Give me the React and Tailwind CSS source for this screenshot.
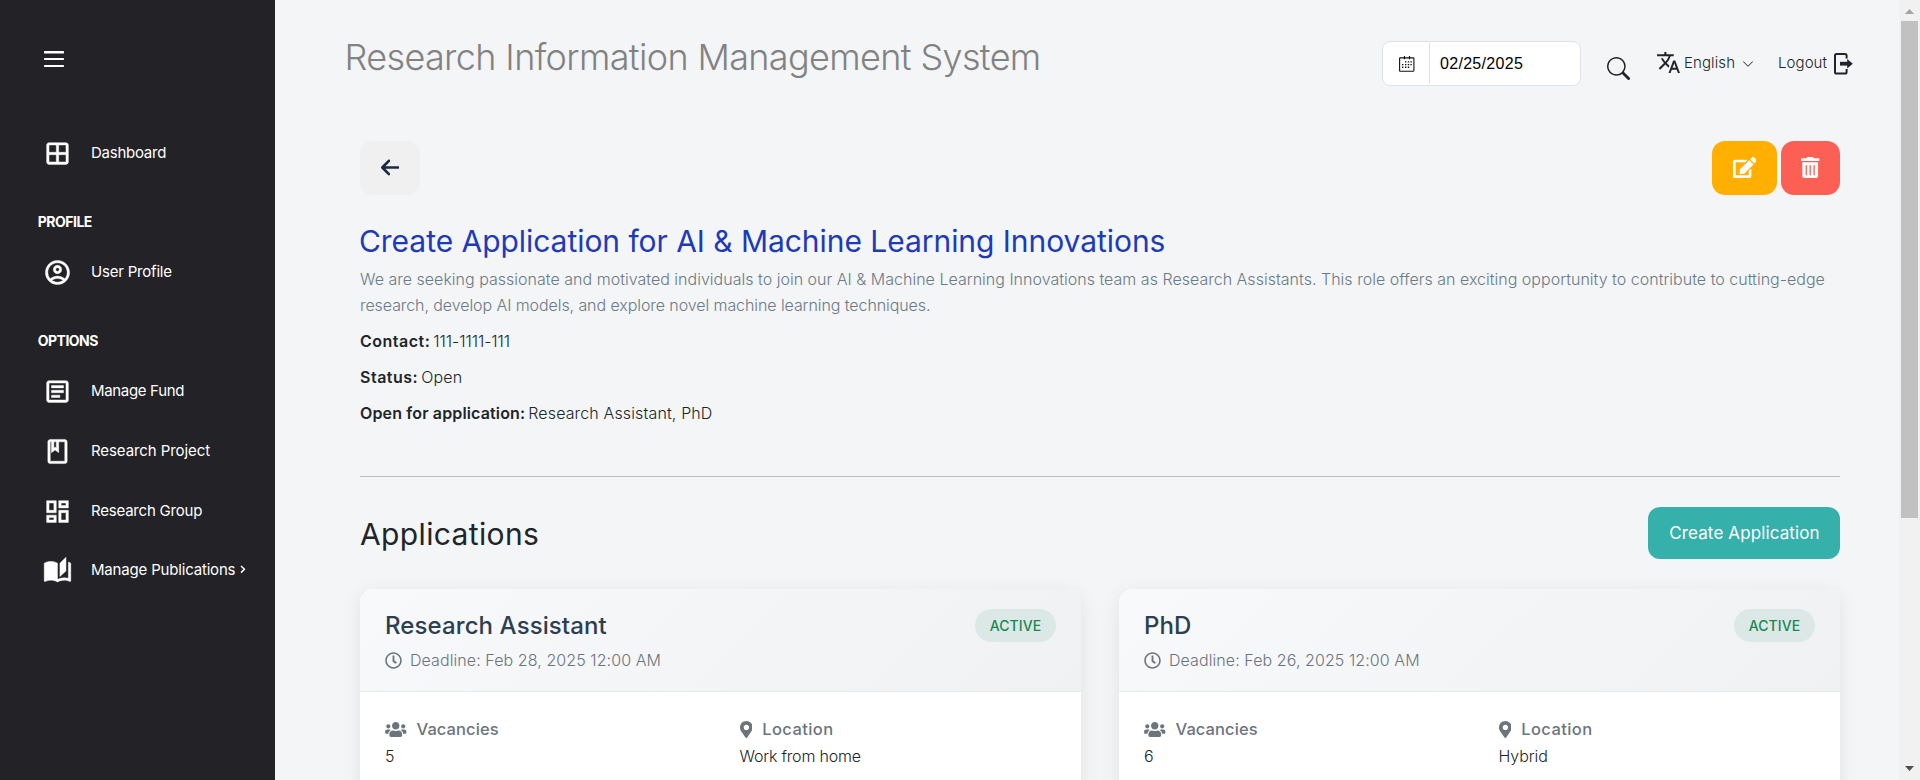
import {
  MdOutlineWindow,
  MdOutlineAccountCircle,
  MdOutlineArticle,
  MdOutlineBook,
  MdOutlineDashboard,
  MdAutoStories,
  MdTranslate,
} from "react-icons/md";
import { BsSearch, BsChevronDown } from "react-icons/bs";
import { FaArrowLeft } from "react-icons/fa6";
import { FaEdit, FaTrashAlt, FaRegClock, FaUsers, FaMapMarkerAlt } from "react-icons/fa";

function NavItem({ icon: Icon, label, spacing, arrow }) {
  return (
    <a className="flex h-[59.6px] items-center pl-[43px] text-white">
      <Icon className="mt-[2px] size-[29px] shrink-0 stroke-current stroke-[0.35px] [&>path[fill=none]]:stroke-none" />
      <span className={"mt-px ml-[19px] text-[15px] leading-6 whitespace-nowrap " + spacing}>{label}</span>
      {arrow && (
        <svg className="ml-[5px] h-[9px] w-[6px]" viewBox="0 0 6 9" fill="none" stroke="currentColor" strokeWidth="1.5">
          <path d="M1 1l3.4 3.3L1 7.6" />
        </svg>
      )}
    </a>
  );
}

function NavHeading({ children }) {
  return (
    <div className="h-[59.6px] pt-[29.6px] pl-[37.8px] text-[14px] leading-5 font-bold tracking-[-0.52px] text-white">
      {children}
    </div>
  );
}

function Sidebar() {
  return (
    <aside className="h-full w-[275px] shrink-0 bg-[#232227]">
      <div className="h-[122.8px] pt-[51px] pl-[44px]">
        <svg className="h-4 w-5" viewBox="0 0 20 16" fill="#fff">
          <rect y="0" width="20" height="2.4" rx="0.4" />
          <rect y="7" width="20" height="2" rx="0.4" />
          <rect y="14" width="20" height="2" rx="0.4" />
        </svg>
      </div>
      <NavItem icon={MdOutlineWindow} label="Dashboard" spacing="tracking-[-0.25px]" />
      <NavHeading>PROFILE</NavHeading>
      <NavItem icon={MdOutlineAccountCircle} label="User Profile" spacing="tracking-[-0.2px]" />
      <NavHeading>OPTIONS</NavHeading>
      <NavItem icon={MdOutlineArticle} label="Manage Fund" spacing="tracking-[-0.33px]" />
      <NavItem icon={MdOutlineBook} label="Research Project" spacing="tracking-[-0.08px]" />
      <NavItem icon={MdOutlineDashboard} label="Research Group" spacing="tracking-[-0.21px]" />
      <NavItem icon={MdAutoStories} label="Manage Publications" spacing="tracking-[-0.18px]" arrow />
    </aside>
  );
}

function CalendarIcon() {
  return (
    <svg className="h-4 w-4" viewBox="0 0 16 16" fill="none" stroke="#111">
      <rect x="0.6" y="1.9" width="14.3" height="13.3" rx="0.6" strokeWidth="1.1" />
      <path d="M5.5 0v3.2M10.5 0v3.2" strokeWidth="1.1" />
      <path
        d="M6 5.9h1.4M8.8 5.9h1.4M11.4 5.9h1.4M3 8.6h1.4M6 8.6h1.4M8.8 8.6h1.4M11.4 8.6h1.4M3 11.3h1.4M6 11.3h1.4M8.8 11.3h1.4"
        strokeWidth="1.4"
      />
    </svg>
  );
}

function LogoutIcon() {
  return (
    <svg className="h-[22px] w-[19px]" viewBox="0 0 19 22" fill="none" stroke="#212529" strokeWidth="2">
      <path d="M12.6 5.6V2.6Q12.6 1 11 1H2.6Q1 1 1 2.6v16.3q0 1.6 1.6 1.6H11q1.6 0 1.6-1.6v-3" />
      <path d="M6 10.7h8" strokeWidth="3.8" />
      <path d="M13.2 5.9v9.6l5.6-4.8z" fill="#212529" stroke="none" />
    </svg>
  );
}

function Header() {
  return (
    <header className="flex h-[141px] items-start justify-between pl-[69.5px] pr-[46px] text-[#212529]">
      <h1 className="mt-[30px] text-[36px] leading-[55px] font-light tracking-[-0.64px] whitespace-nowrap text-[#828282]">
        Research Information Management System
      </h1>
      <div className="mt-[41px] flex h-[45px] items-center text-[15px] font-light">
        <div className="flex h-[45px] w-[199px] items-center rounded-lg border border-[#dee2e6] bg-white p-px">
          <div className="flex h-full w-[46px] items-center justify-center border-r border-[#dee2e6]">
            <CalendarIcon />
          </div>
          <span className="pl-[10px] font-['Liberation_Sans',sans-serif] text-[16px] font-normal tracking-[0.3px] text-black">
            02/25/2025
          </span>
        </div>
        <BsSearch className="mt-[9px] ml-[26px] size-[23px]" />
        <MdTranslate className="-mt-[2px] ml-[26px] size-[25px]" />
        <span className="ml-[3px] w-[52px] tracking-[0.1px]">English</span>
        <BsChevronDown className="ml-[6px] mt-px size-[12px]" />
        <span className="ml-[24px] w-[50px] tracking-[0.08px]">Logout</span>
        <span className="ml-[6px]">
          <LogoutIcon />
        </span>
      </div>
    </header>
  );
}

function Field({ icon: Icon, iconClass, label, value, labelClass, valueClass }) {
  return (
    <div>
      <div className="flex h-6 items-center text-[16.5px] font-medium text-[#6c757d]">
        <Icon className={"mr-[10px] h-[17px] shrink-0 " + iconClass} />
        <span className={labelClass}>{label}</span>
      </div>
      <div className={"mt-[3px] text-[16px] leading-6 font-light text-[#212529] " + valueClass}>{value}</div>
    </div>
  );
}

function ApplicationCard({ title, deadline, vacancies, location, locationClass }) {
  return (
    <article className="h-[400px] overflow-hidden rounded-[14px] bg-white shadow-[0_4px_20px_rgba(0,0,0,0.08)]">
      <div className="flex h-[103px] items-start justify-between border-b border-[#e7e9ec] bg-linear-135 from-[#f8f9fb] to-[#f0f1f3] px-[25px] pt-5">
        <div>
          <h3 className="pt-0.5 text-[24px] leading-[29px] font-medium tracking-[0.1px] text-[#2c3e50]">
            {title}
          </h3>
          <div className="mt-2 flex h-6 items-center text-[16px] font-light tracking-[0.08px] text-[#6c757d]">
            <FaRegClock className="mr-2 size-[17px]" />
            {deadline}
          </div>
        </div>
        <span className="flex h-[33px] w-[81px] items-center justify-center rounded-full bg-[#dce8e5] text-[14px] font-medium tracking-[0.09px] text-[#198754]">
          ACTIVE
        </span>
      </div>
      <div className="grid grid-cols-2 gap-x-[38px] px-[25px] pt-[25px]">
        <Field
          icon={FaUsers}
          iconClass="w-[21.5px]"
          label="Vacancies"
          value={vacancies}
          labelClass="tracking-[0.08px]"
          valueClass=""
        />
        <Field
          icon={FaMapMarkerAlt}
          iconClass="w-[12.75px]"
          label="Location"
          value={location}
          labelClass="tracking-[0.4px]"
          valueClass={locationClass}
        />
      </div>
    </article>
  );
}

function Detail({ label, value, labelClass, valueClass }) {
  return (
    <p className="flex h-6 items-center text-[16px] whitespace-pre">
      <span className={"font-semibold " + labelClass}>{label}</span>
      <span className={"ml-[3px] font-light " + valueClass}>{value}</span>
    </p>
  );
}

function Scrollbar() {
  return (
    <div className="flex h-full w-[21px] shrink-0 flex-col items-center justify-between bg-[#f1f1f1]">
      <div className="flex flex-col items-center">
        <svg className="mt-[9px] h-[5px] w-[9px]" viewBox="0 0 9 5">
          <path d="M0 5L4.5 0L9 5z" fill="#a3a3a3" />
        </svg>
        <div className="mt-[7px] h-[497px] w-[17px] bg-[#c1c1c1]" />
      </div>
      <svg className="mb-[9px] h-[5px] w-[9px]" viewBox="0 0 9 5">
        <path d="M0 0L4.5 5L9 0z" fill="#505050" />
      </svg>
    </div>
  );
}

export default function App() {
  return (
    <div className="flex h-[780px] w-full overflow-hidden bg-[#f3f5f7] font-['Inter',sans-serif]">
      <Sidebar />
      <main className="h-full min-w-0 flex-1 overflow-hidden">
        <Header />
        <div className="pr-[59px] pl-[85px] text-[#212529]">
          <div className="flex justify-between">
            <button className="flex h-[54px] w-[60px] items-center justify-center rounded-[13px] bg-[#f0f0f0] pb-px text-[#1b2a41]">
              <FaArrowLeft className="h-[21px] w-[18.4px]" />
            </button>
            <div className="flex gap-1">
              <button className="flex h-[54px] w-[65px] items-center justify-center rounded-[13px] bg-[#ffaf00] pb-px text-white">
                <FaEdit className="h-[21px] w-[23.6px]" />
              </button>
              <button className="flex h-[54px] w-[59px] items-center justify-center rounded-[13px] bg-[#fc6054] pb-px text-white">
                <FaTrashAlt className="h-[21px] w-[18.4px]" />
              </button>
            </div>
          </div>
          <h2 className="-ml-px mt-7 text-[30px] leading-9 tracking-[-0.045px] text-[#1e3ab8]">
            Create Application for AI &amp; Machine Learning Innovations
          </h2>
          <p className="mt-[7px] text-[16px] leading-[26px] font-light text-[#6c7a86]">
            <span className="block tracking-[0.013px] whitespace-nowrap">
              We are seeking passionate and motivated individuals to join our AI &amp; Machine Learning Innovations team
              as Research Assistants. This role offers an exciting opportunity to contribute to cutting-edge
            </span>
            <span className="block tracking-[-0.08px]">
              research, develop AI models, and explore novel machine learning techniques.
            </span>
          </p>
          <div className="mt-[11px] flex flex-col gap-3">
            <Detail label="Contact:" value="111-1111-111" labelClass="tracking-[0.5px]" valueClass="tracking-[-0.06px]" />
            <Detail label="Status:" value="Open" labelClass="tracking-[0.5px]" valueClass="tracking-[0.2px]" />
            <Detail
              label="Open for application:"
              value="Research Assistant, PhD"
              labelClass="tracking-[0.146px]"
              valueClass="tracking-[0.134px]"
            />
          </div>
          <hr className="mt-[51px] border-[#bdc0c3]" />
          <div className="mt-[30px] flex h-[52px] items-center justify-between">
            <h2 className="mt-[2px] text-[30px] leading-9 tracking-[0.36px]">Applications</h2>
            <button className="h-[52px] w-[192px] rounded-[12px] bg-[#35b0ab] pt-[2px] pl-px text-[17px] tracking-[0.12px] text-white">
              Create Application
            </button>
          </div>
          <div className="mt-[30px] grid grid-cols-2 gap-x-[38px]">
            <ApplicationCard
              title="Research Assistant"
              deadline="Deadline: Feb 28, 2025 12:00 AM"
              vacancies="5"
              location="Work from home"
              locationClass="tracking-[-0.2px]"
            />
            <ApplicationCard
              title="PhD"
              deadline="Deadline: Feb 26, 2025 12:00 AM"
              vacancies="6"
              location="Hybrid"
              locationClass="tracking-[-0.1px]"
            />
          </div>
        </div>
      </main>
      <Scrollbar />
    </div>
  );
}
